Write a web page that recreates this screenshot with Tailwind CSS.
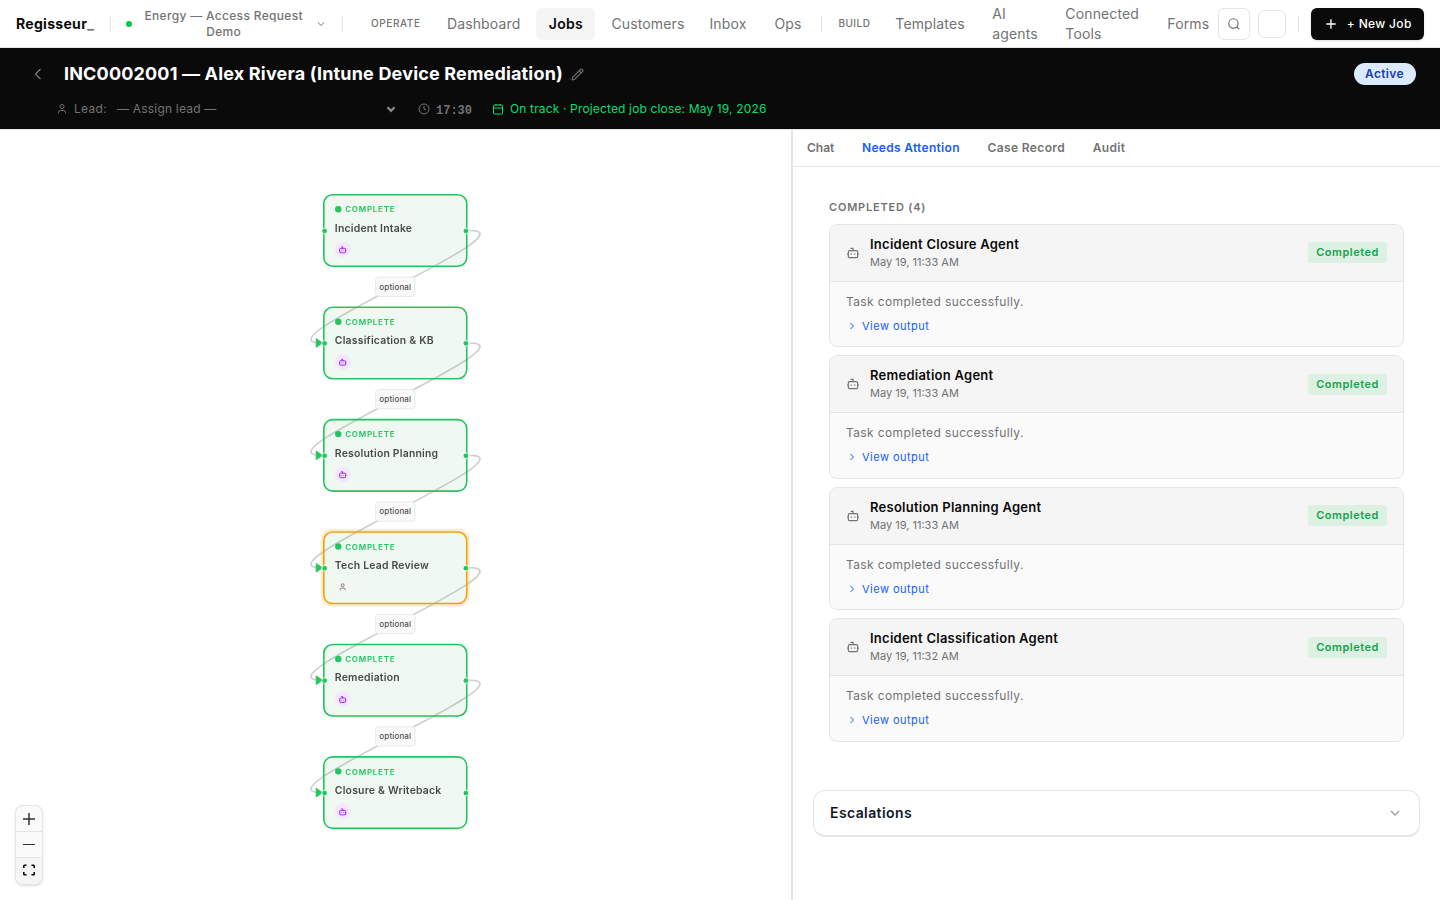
<!DOCTYPE html>
<html lang="en">
<head>
<meta charset="utf-8">
<title>Regisseur</title>
<script src="https://cdn.jsdelivr.net/npm/@tailwindcss/browser@4"></script>
</head>
<body class="h-[900px] w-[1440px] overflow-hidden bg-white font-['Inter',sans-serif] text-[#0a0a0a]">
<svg class="hidden">
  <defs>
    <symbol id="bot" viewBox="0 0 24 24"><path d="M12 8V4H8M2 14h2M20 14h2M15 13v2M9 13v2"/><rect width="16" height="12" x="4" y="8" rx="2"/></symbol>
    <symbol id="person" viewBox="0 0 24 24"><circle cx="12" cy="7" r="4"/><path d="M19 21v-2a4 4 0 0 0-4-4H9a4 4 0 0 0-4 4v2"/></symbol>
    <symbol id="down" viewBox="0 0 24 24"><path d="m6 9 6 6 6-6"/></symbol>
    <symbol id="right" viewBox="0 0 24 24"><path d="m9 18 6-6-6-6"/></symbol>
    <symbol id="left" viewBox="0 0 24 24"><path d="m15 18-6-6 6-6"/></symbol>
    <symbol id="plus" viewBox="0 0 24 24"><path d="M5 12h14M12 5v14"/></symbol>
  </defs>
</svg>
<div class="flex h-full flex-col">
  <header class="flex h-12 shrink-0 items-center border-b border-[#e5e5e5] px-4 text-[#737373]">
    <div class="w-[94px] text-[14px] font-bold tracking-[0.3px] text-[#0a0a0a]">Regisseur<span class="text-[#737373]">_</span></div>
    <div class="h-4 w-px bg-[#e5e5e5]"></div>
    <div class="ml-[15px] size-1.5 rounded-full bg-[#00c950]"></div>
    <div class="ml-2 w-[168px] text-center text-[12px] leading-4 font-medium tracking-[0.32px]">Energy — Access Request Demo</div>
    <svg class="ml-[7px] size-3 fill-none stroke-current stroke-2"><use href="#down"/></svg>
    <div class="ml-[15px] h-4 w-px bg-[#e5e5e5]"></div>
    <div class="ml-[28.500px] w-[65.500px] text-[10px] font-medium tracking-[0.6px]">OPERATE</div>
    <nav class="flex items-center text-[14px] leading-5 tracking-[0.14px]">
      <span class="w-[100px] px-[10.500px]">Dashboard</span>
      <span class="flex h-8 w-[59px] items-center justify-center rounded-md bg-[#f5f5f5] font-semibold tracking-[0.3px] text-[#0a0a0a]">Jobs</span>
      <span class="ml-1 w-[98px] px-3">Customers</span>
      <span class="w-[65px] px-3">Inbox</span>
      <span class="w-[59px] px-3">Ops</span>
    </nav>
    <div class="h-4 w-px bg-[#e5e5e5]"></div>
    <div class="ml-4 w-[45px] text-[10px] font-medium tracking-[0.5px]">BUILD</div>
    <nav class="flex items-center text-[14px] leading-5 tracking-[0.14px]">
      <span class="w-[97px] px-3">Templates</span>
      <span class="w-[73px] px-3">AI agents</span>
      <span class="w-[102px] px-3">Connected Tools</span>
      <span class="w-[63px] px-3">Forms</span>
    </nav>
    <div class="flex h-8 w-8 items-center justify-center rounded-md border border-[#e5e5e5]">
      <svg class="size-3.5 fill-none stroke-current stroke-2" viewBox="0 0 24 24"><circle cx="11" cy="11" r="8"/><path d="m21 21-4.3-4.3"/></svg>
    </div>
    <div class="ml-2 size-7 rounded-md border border-[#e5e5e5]"></div>
    <div class="ml-3 h-4 w-px bg-[#e5e5e5]"></div>
    <div class="ml-3 flex h-8 w-[113px] items-center rounded-md bg-[#0a0a0a] text-white shadow-sm">
      <svg class="ml-3 size-4 fill-none stroke-current stroke-2"><use href="#plus"/></svg>
      <span class="ml-[7.500px] text-[12px] font-medium tracking-[0.35px] whitespace-nowrap">+ New Job</span>
    </div>
  </header>

  <section class="flex h-[81px] shrink-0 flex-col bg-[#0a0a0a] pt-3">
    <div class="flex h-7 items-center pr-6 pl-[28px]">
      <svg class="size-5 fill-none stroke-[#7c7c7c] stroke-[1.6]"><use href="#left"/></svg>
      <h1 class="ml-4 pb-0.5 text-[18px] font-bold tracking-[0.17px] whitespace-nowrap text-white">INC0002001 — Alex Rivera (Intune Device Remediation)</h1>
      <svg class="ml-2 size-[13px] fill-none stroke-[#737373] stroke-2" viewBox="0 0 24 24"><path d="M21.2 6.8a1 1 0 0 0-4-4L3.8 16.2a2 2 0 0 0-.5.8l-1.3 4.400a.5.5 0 0 0 .6.6l4.400-1.300a2 2 0 0 0 .8-.5zM15 5l4 4"/></svg>
      <span class="ml-auto flex h-[22px] w-[62px] items-center justify-center rounded-full bg-[#dbeafe] pr-px text-[12px] font-semibold tracking-[0.35px] text-[#193cb8]">Active</span>
    </div>
    <div class="mt-3 flex h-[18px] items-center pl-14 text-[12px] tracking-[0.3px] text-[#737373]">
      <svg class="size-3 fill-none stroke-current stroke-2"><use href="#person"/></svg>
      <span class="ml-1.5 w-[43px]">Lead:</span>
      <span class="w-[267px] tracking-[0.2px]">— Assign lead —</span>
      <svg class="size-3.5 fill-none stroke-[#8a8a8a] stroke-[4]"><use href="#down"/></svg>
      <svg class="ml-5 size-3 fill-none stroke-current stroke-2" viewBox="0 0 24 24"><circle cx="12" cy="12" r="10"/><path d="M12 6v6l4 2"/></svg>
      <span class="ml-[6px] w-14 pt-[3px] font-['Liberation_Mono',monospace] font-bold tracking-normal">17:30</span>
      <svg class="size-3 fill-none stroke-[#05df72] stroke-2" viewBox="0 0 24 24"><rect width="18" height="18" x="3" y="4" rx="2"/><path d="M8 2v4M16 2v4M3 10h18"/></svg>
      <span class="ml-1.5 tracking-[0.15px] text-[#05df72]">On track · Projected job close: May 19, 2026</span>
    </div>
  </section>

  <main class="flex min-h-0 flex-1 border-t border-[#e5e5e5]">
    <section class="relative w-[791px]">
      <div id="flow" class="absolute top-[63.700px] left-[323.200px] h-[790px] w-[180px] origin-top-left scale-[0.803]">
        <svg id="edges" class="absolute top-0 left-0 h-[790px] w-[180px] overflow-visible fill-none"></svg>
      </div>
      <div class="absolute top-[675px] left-[15px] flex w-7 flex-col overflow-hidden rounded-lg border border-[#e5e5e5] bg-[#fafafa] shadow-sm">
        <div class="flex h-[26px] items-center justify-center border-b border-[#e5e5e5]"><svg class="size-3 stroke-[#333] stroke-[1.5]" viewBox="0 0 12 12"><path d="M0 6h12M6 0v12"/></svg></div>
        <div class="flex h-[26px] items-center justify-center border-b border-[#e5e5e5]"><svg class="size-3 stroke-[#333] stroke-1" viewBox="0 0 12 12"><path d="M0 5.500h12"/></svg></div>
        <div class="flex h-[26px] items-center justify-center bg-[#f5f5f5] pb-0.5"><svg class="size-3 fill-none stroke-black stroke-[1.6]" viewBox="0 0 12 12"><path d="M.8 4V2Q.8 1.300 1.500 1.300H3.500M8.500 1.300h2q.7 0 .7.7v2M11.200 8v2q0 .7-.7.7h-2M3.500 10.700h-2Q.8 10.700.8 10V8"/></svg></div>
      </div>
    </section>

    <section class="flex-1 border-l-2 border-[#e5e5e5]">
      <nav class="flex h-[37px] items-center gap-[27.700px] border-b border-[#e5e5e5] pl-3.5 text-[12px] font-semibold tracking-[0.3px] text-[#737373]">
        <span class="tracking-[0px]">Chat</span><span class="text-[#155dfc]">Needs Attention</span><span class="tracking-[0.37px]">Case Record</span><span>Audit</span>
      </nav>
      <div class="pt-8 pr-9 pl-9">
        <h2 class="h-[24.750px] text-[11px] leading-[17px] font-semibold tracking-[0.8px] text-[#737373]">COMPLETED (4)</h2>
        <div id="cards" class="flex flex-col gap-2"></div>
      </div>
      <div class="mt-[48.250px] mr-5 ml-5 flex h-[47px] items-center rounded-xl border border-b-2 border-[#e5e5e5] px-4 pb-0.5 text-[14px] font-semibold tracking-[0.4px] text-[#101828]">
        Escalations
        <svg class="mt-0.5 ml-auto size-4 fill-none stroke-[#99a1af] stroke-2"><use href="#down"/></svg>
      </div>
    </section>
  </main>
</div>

<template id="card">
  <article class="h-[123.500px] overflow-hidden rounded-lg border border-[#e5e5e5] bg-[#fafafa]">
    <div class="flex h-[57px] items-center border-b border-[#e5e5e5] bg-[#f5f5f5] px-4">
      <svg class="size-3.5 fill-none stroke-[#737373] stroke-2"><use href="#bot"/></svg>
      <div class="ml-2.5 pb-[1.500px]">
        <div data-name class="text-[13px] leading-[20px] font-semibold tracking-[0.25px]"></div>
        <div data-time class="text-[11px] leading-[17px] text-[#737373]"></div>
      </div>
      <span class="mb-[0.500px] ml-auto flex h-[21px] w-[79px] items-center justify-center rounded-[3px] bg-[#dcf1e3] text-[11px] font-semibold tracking-[0.5px] text-[#16a34a]">Completed</span>
    </div>
    <div class="px-4 pt-[10px]">
      <div class="text-[12px] leading-5 tracking-[0.38px] text-[#737373]">Task completed successfully.</div>
      <div class="mt-[5px] flex items-center text-[11px] leading-[18px] tracking-[0.48px] text-[#155dfc]"><svg class="mr-1 size-3 fill-none stroke-current stroke-2"><use href="#right"/></svg>View output</div>
    </div>
  </article>
</template>

<template id="node">
  <div class="absolute left-0 h-[91px] w-[179.500px] rounded-[12px] border-2 border-[#22c55e] bg-[#16a34a]/7 px-[12.700px] pt-2">
    <div class="flex h-[18.700px] items-center text-[10px] font-semibold tracking-[0.9px] text-[#22c55e]"><i class="mr-[5px] size-2 rounded-full bg-[#22c55e]"></i>COMPLETE</div>
    <div data-name class="mt-[3px] text-[13px] leading-[20px] font-semibold tracking-[0.25px] whitespace-nowrap text-[#4a4a4a]"></div>
    <div data-badge class="mt-[7.500px] flex size-5 items-center justify-center rounded-full"><svg class="size-[11px] fill-none stroke-current stroke-[2.400]"><use/></svg></div>
    <i class="absolute top-[39.500px] -left-[4px] size-2 rounded-full border border-white bg-[#22c55e]"></i>
    <i class="absolute top-[39.500px] -right-[4px] size-2 rounded-full border border-white bg-[#22c55e]"></i>
  </div>
</template>

<template id="label">
  <div class="absolute left-[65px] flex h-[25px] w-[50px] items-center justify-center rounded-[4px] border border-[#e5e5e5] bg-[#fafafa] text-[10px] font-medium tracking-[0.15px] text-[#525252]">optional</div>
</template>

<script>
  const clone = id => document.getElementById(id).content.firstElementChild.cloneNode(true);

  [['Incident Closure Agent', '11:33'], ['Remediation Agent', '11:33'], ['Resolution Planning Agent', '11:33'], ['Incident Classification Agent', '11:32']].forEach(([name, time]) => {
    const card = clone('card');
    card.querySelector('[data-name]').textContent = name;
    card.querySelector('[data-time]').textContent = `May 19, ${time} AM`;
    document.getElementById('cards').append(card);
  });

  const flow = document.getElementById('flow');
  let paths = '';
  ['Incident Intake', 'Classification & KB', 'Resolution Planning', 'Tech Lead Review', 'Remediation', 'Closure & Writeback'].forEach((name, i) => {
    const node = clone('node'), human = i === 3, top = i * 140;
    node.style.top = top + 'px';
    node.querySelector('[data-name]').textContent = name;
    node.querySelector('use').setAttribute('href', human ? '#person' : '#bot');
    node.querySelector('[data-badge]').className += human ? ' bg-[#f5f5f5] text-[#737373]' : ' bg-[#f3e8ff] text-[#9810fa]';
    if (human) node.className = node.className.replace('border-[#22c55e]', 'border-[#f59e0b] shadow-[0_0_0_3px_rgba(245,158,11,0.2)]');
    flow.append(node);
    if (i < 5) {
      const y = top + 45.5, end = y + 140;
      paths += `<path d="M182.5 ${y}C266.5 ${y} -86 ${end} -2 ${end}" stroke="#cfcfcf" stroke-width="2"/><path d="M-8.5 ${end - 5.500}L-.5 ${end}L-8.5 ${end + 5.500}Z" fill="#22c55e" stroke="#22c55e"/>`;
      const label = clone('label');
      label.style.top = top + 102.6 + 'px';
      flow.append(label);
    }
  });
  document.getElementById('edges').innerHTML = paths;
</script>
</body>
</html>
